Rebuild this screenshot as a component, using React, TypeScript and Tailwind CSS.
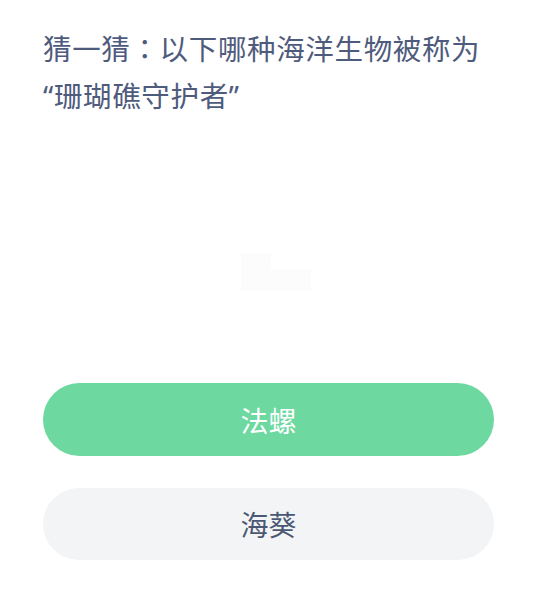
import React from "react";

export default function App() {
  const latin = { fontFamily: '"Noto Sans", "Liberation Sans", sans-serif' };
  return (
    <div
      className="w-[536px] h-[591px] bg-white pl-[43px] pr-[42px] pt-[24px] overflow-hidden"
      style={{ fontFamily: '"Noto Sans CJK SC", "Noto Sans", sans-serif' }}
    >
      <h1 className="h-[94px] text-[28.5px] leading-[47px] text-[#4f5b7c] font-normal tracking-[0.65px]">
        猜一猜
        <span style={{ fontFamily: '"Noto Sans CJK TC", sans-serif' }}>：</span>
        以下哪种海洋生物被称为
        <br />
        <span style={latin}>“</span>珊瑚礁守护者<span style={latin}>”</span>
      </h1>
      <div className="h-[265px] flex items-center justify-center">
        <div className="relative w-[72px] h-[44px] mt-[36px] ml-[16px]">
          <div className="absolute left-[0px] top-[6px] w-[30px] h-[26px] bg-[#fcfcfc]" />
          <div className="absolute left-[0px] top-[22px] w-[70px] h-[22px] bg-[#fcfcfc]" />
        </div>
      </div>
      <div className="flex flex-col gap-[32px]">
        <button className="h-[73px] w-full rounded-full bg-[#6dd89f] text-white text-[28px] flex items-center justify-center">
          法螺
        </button>
        <button className="h-[72px] w-full rounded-full bg-[#f3f4f6] text-[#4b5874] text-[28px] flex items-center justify-center">
          海葵
        </button>
      </div>
    </div>
  );
}
